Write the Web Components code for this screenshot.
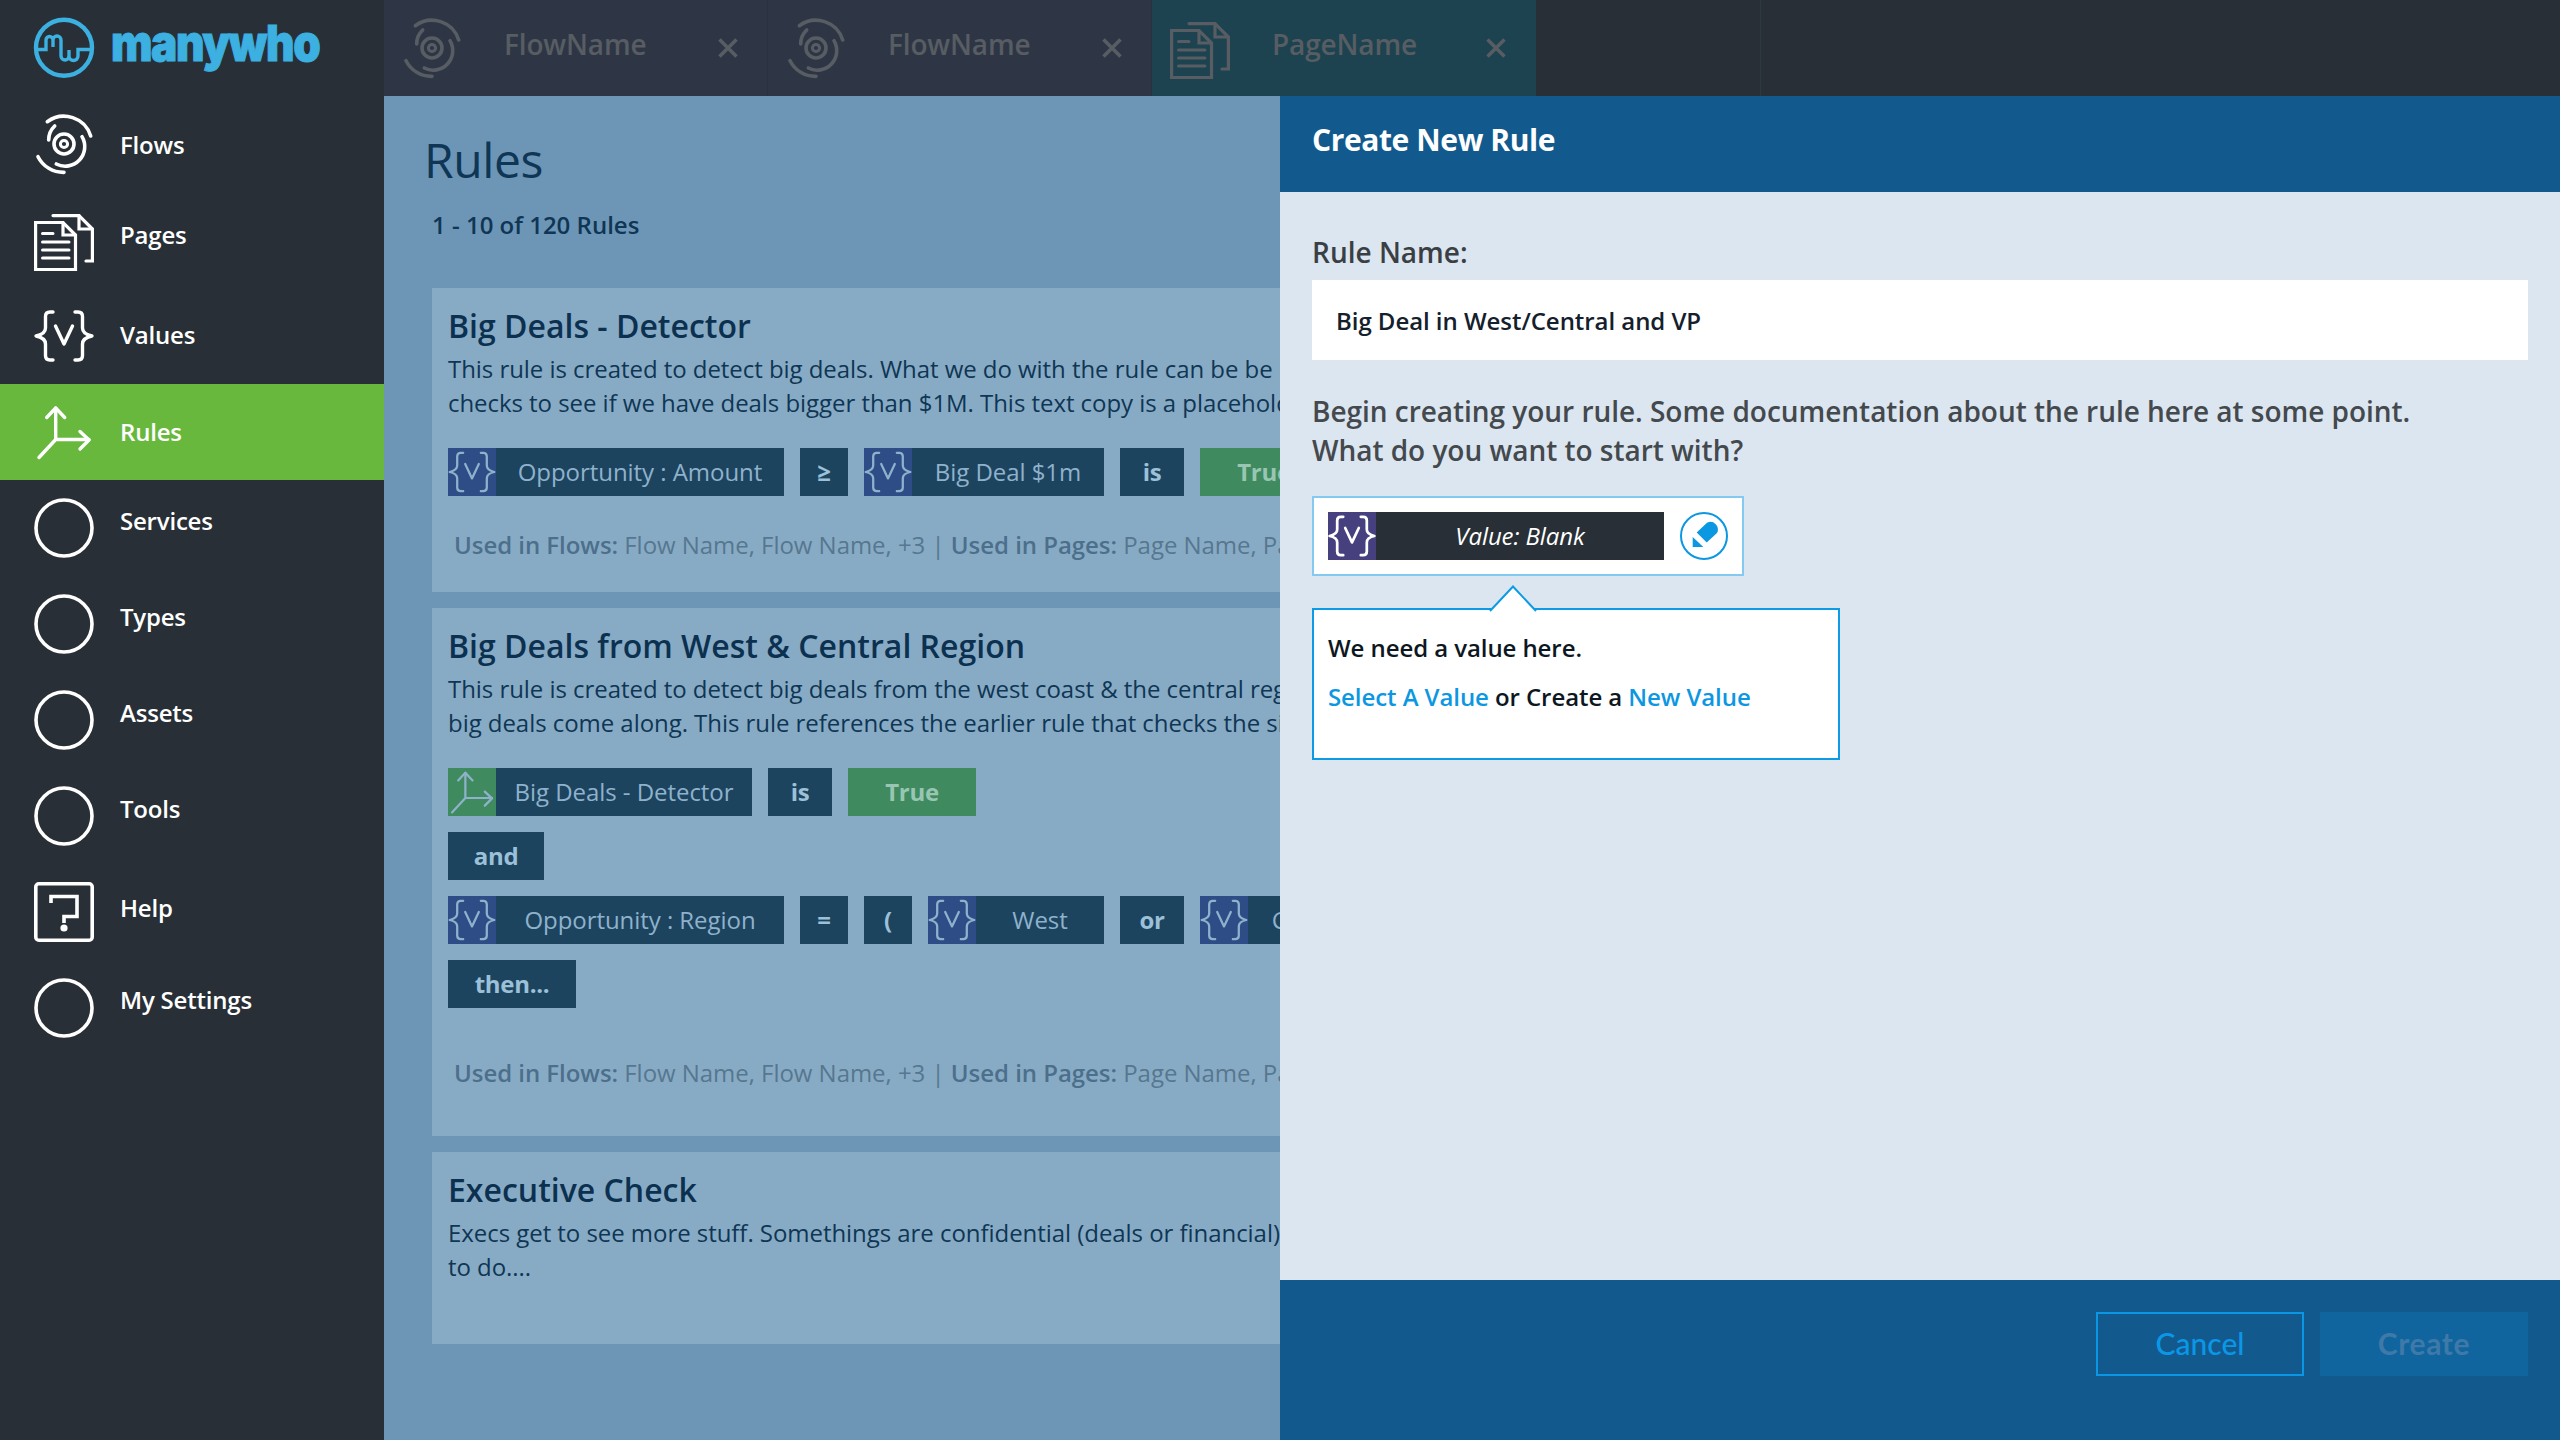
<!DOCTYPE html>
<html>
<head>
<meta charset="utf-8">
<title>ManyWho Rules</title>
<style>
  html, body { margin: 0; height: 100%; background: #282f36; }
  body { font-family: "Open Sans", "Liberation Sans", sans-serif; overflow: hidden; }
</style>
</head>
<body>
<mw-app>
  <mw-sidebar slot="side">
    <mw-nav-item icon="flow" lift="1">Flows</mw-nav-item>
    <mw-nav-item icon="page" lift="-5">Pages</mw-nav-item>
    <mw-nav-item icon="value" lift="-1">Values</mw-nav-item>
    <mw-nav-item icon="rule" active>Rules</mw-nav-item>
    <mw-nav-item icon="ring" lift="-7">Services</mw-nav-item>
    <mw-nav-item icon="ring" lift="-7">Types</mw-nav-item>
    <mw-nav-item icon="ring" lift="-7">Assets</mw-nav-item>
    <mw-nav-item icon="ring" lift="-7">Tools</mw-nav-item>
    <mw-nav-item icon="help" lift="-4">Help</mw-nav-item>
    <mw-nav-item icon="ring" lift="-8">My Settings</mw-nav-item>
  </mw-sidebar>

  <mw-tabs slot="tabs">
    <mw-tab icon="flow">FlowName</mw-tab>
    <mw-tab icon="flow">FlowName</mw-tab>
    <mw-tab icon="page" kind="page">PageName</mw-tab>
  </mw-tabs>

  <rules-page slot="content">
    <rule-card>
      <span slot="title">Big Deals - Detector</span>
      <span slot="text">This rule is created to detect big deals. What we do with the rule can be be<br>checks to see if we have deals bigger than $1M. This text copy is a placeholder</span>
      <chip-row>
        <rule-chip icon="value" w="336">Opportunity : Amount</rule-chip>
        <rule-chip op w="48">≥</rule-chip>
        <rule-chip icon="value" w="240">Big Deal $1m</rule-chip>
        <rule-chip op w="64">is</rule-chip>
        <rule-chip op green w="128">True</rule-chip>
      </chip-row>
      <rule-usage slot="usage"></rule-usage>
    </rule-card>

    <rule-card tall>
      <span slot="title">Big Deals from West &amp; Central Region</span>
      <span slot="text">This rule is created to detect big deals from the west coast &amp; the central region<br>big deals come along. This rule references the earlier rule that checks the size</span>
      <chip-row>
        <rule-chip icon="rule" green-icon w="304">Big Deals - Detector</rule-chip>
        <rule-chip op w="64">is</rule-chip>
        <rule-chip op green w="128">True</rule-chip>
      </chip-row>
      <chip-row>
        <rule-chip op w="96">and</rule-chip>
      </chip-row>
      <chip-row>
        <rule-chip icon="value" w="336">Opportunity : Region</rule-chip>
        <rule-chip op w="48">=</rule-chip>
        <rule-chip op w="48">(</rule-chip>
        <rule-chip icon="value" w="176">West</rule-chip>
        <rule-chip op w="64">or</rule-chip>
        <rule-chip icon="value" w="176">Central</rule-chip>
      </chip-row>
      <chip-row>
        <rule-chip op w="128">then...</rule-chip>
      </chip-row>
      <rule-usage slot="usage" far></rule-usage>
    </rule-card>

    <rule-card short>
      <span slot="title">Executive Check</span>
      <span slot="text">Execs get to see more stuff. Somethings are confidential (deals or financial)<br>to do....</span>
    </rule-card>
  </rules-page>

  <rule-modal slot="modal"></rule-modal>
</mw-app>

<script>
const ICONS = {
  flow: `<g fill="none" stroke="currentColor" stroke-width="3.6" stroke-linecap="round">
      <circle cx="30" cy="30" r="10"/><circle cx="30" cy="30" r="3.6" stroke-width="3"/>
      <path d="M13.3 7.7A28 28 0 0 1 56.7 22"/>
      <path d="M4 42.7A28.5 28.5 0 0 0 30 58.4"/>
      <path d="M14.7 26A19 19 0 0 1 20.7 12"/>
      <path d="M48 22.7A19.5 19.5 0 0 1 22.3 50"/></g>`,
  page: `<g transform="translate(0 4)" fill="none" stroke="currentColor" stroke-width="3.2" stroke-linejoin="miter" stroke-linecap="round">
      <path d="M1.6 8.5H29L41.5 21V55.5H1.6Z"/><path d="M29 8.5V21H41.5"/>
      <path d="M8.5 19.5H19M8.5 28H35M8.5 36H35M8.5 44H35" stroke-width="3"/>
      <path d="M19 1.6H45L58.4 15V47H52"/><path d="M45 1.6V15H58.4"/></g>`,
  value: `<g fill="none" stroke="currentColor" style="stroke-width:var(--icon-stroke,3.4px)" stroke-linecap="round" stroke-linejoin="round">
      <path d="M19 6H16Q11.5 6 11.5 10.5V22Q11.5 28 2 30Q11.5 32 11.5 38V49.5Q11.5 54 16 54H19"/>
      <path d="M41 6H44Q48.5 6 48.5 10.5V22Q48.5 28 58 30Q48.5 32 48.5 38V49.5Q48.5 54 44 54H41"/>
      <path d="M21.5 20L30 38L38.5 20"/></g>`,
  rule: `<g fill="none" stroke="currentColor" style="stroke-width:var(--icon-stroke,3.4px)" stroke-linecap="round" stroke-linejoin="round">
      <path d="M21.7 6V37.5L5 55.5M21.7 37.5H55"/>
      <path d="M12.7 15.5L21.7 6L30.7 15.5M46 29.5L55 38L46 47"/></g>`,
  ring: `<circle cx="30" cy="30" r="28" fill="none" stroke="currentColor" stroke-width="3.6"/>`,
  help: `<g fill="none" stroke="currentColor" stroke-width="3.6">
      <rect x="1.8" y="1.8" width="56.4" height="56.4" rx="3"/>
      <path d="M17 21V14.5H43V34.5H30V41"/></g><circle cx="30" cy="46" r="3.6" fill="currentColor"/>`
};

class MwIcon extends HTMLElement {
  constructor() {
    super();
    this.attachShadow({ mode: 'open' });
  }
  connectedCallback() {
    this.shadowRoot.innerHTML = `
      <style>
        :host { display: block; width: var(--icon-size, 60px); height: var(--icon-size, 60px); flex: none; }
        svg { display: block; width: 100%; height: 100%; overflow: visible; }
      </style>
      <svg viewBox="0 0 60 60">${ICONS[this.getAttribute('name')] || ''}</svg>`;
  }
}

class MwApp extends HTMLElement {
  constructor() {
    super();
    this.attachShadow({ mode: 'open' });
    this.shadowRoot.innerHTML = `
      <style>
        :host { display: grid; grid-template-columns: 384px 1fr; grid-template-rows: 96px 1fr; height: 100vh; overflow: hidden; }
        .side { grid-row: 1 / 3; display: block; }
        .content { position: relative; overflow: hidden; }
        .over { position: absolute; top: 0; bottom: 0; left: 896px; right: 0; }
      </style>
      <div class="side"><slot name="side"></slot></div>
      <div><slot name="tabs"></slot></div>
      <div class="content">
        <slot name="content"></slot>
        <div class="over"><slot name="modal"></slot></div>
      </div>`;
  }
}

class MwSidebar extends HTMLElement {
  constructor() {
    super();
    this.attachShadow({ mode: 'open' });
    this.shadowRoot.innerHTML = `
      <style>
        :host { display: block; height: 100%; background: #282f36; }
        .brand { height: 96px; display: flex; align-items: flex-start; padding-left: 28px; box-sizing: border-box; color: #3cb0e0; }
        .brand svg { width: 72px; height: 76px; margin-top: 10px; flex: none; }
        .word { margin: 8px 0 0 11px; font: 900 50px/70px Inter, "Liberation Sans", sans-serif; letter-spacing: -1.6px; -webkit-text-stroke: 1px #3cb0e0; transform: scaleX(.88); transform-origin: left center; }
      </style>
      <div class="brand">
        <svg viewBox="0 0 72 76" fill="none" stroke="currentColor">
          <circle cx="36" cy="37.7" r="28" stroke-width="4.4"/>
          <path stroke-width="3.4" d="M8 39.5H18V30A3.5 3.5 0 0 1 25 30V37M25 30A4 4 0 0 1 33 30V46A4 4 0 0 0 41 46V40M41 46A4.5 4.5 0 0 0 50 46V39.5H64"/>
        </svg>
        <div class="word">manywho</div>
      </div>
      <slot></slot>`;
  }
}

class MwNavItem extends HTMLElement {
  constructor() {
    super();
    this.attachShadow({ mode: 'open' });
  }
  connectedCallback() {
    const lift = this.getAttribute('lift') || 0;
    this.shadowRoot.innerHTML = `
      <style>
        :host { display: flex; align-items: center; height: 96px; padding-left: 34px; gap: 26px; color: #fff; font-size: 24px; font-weight: 600; letter-spacing: -0.2px; }
        :host([active]) { background: #69b83e; }
        .label { margin-top: ${lift * 2 - 1}px; }
      </style>
      <mw-icon name="${this.getAttribute('icon')}"></mw-icon>
      <span class="label"><slot></slot></span>`;
  }
}

class MwTabs extends HTMLElement {
  constructor() {
    super();
    this.attachShadow({ mode: 'open' });
    this.shadowRoot.innerHTML = `
      <style>
        :host { display: flex; height: 96px; background: #282f36; }
        .gap { width: 224px; border-right: 1px solid #2f373f; }
      </style>
      <slot></slot>
      <div class="gap"></div>`;
  }
}

class MwTab extends HTMLElement {
  constructor() {
    super();
    this.attachShadow({ mode: 'open' });
  }
  connectedCallback() {
    this.shadowRoot.innerHTML = `
      <style>
        :host { display: flex; align-items: center; width: 384px; box-sizing: border-box; padding-left: 18px; background: #2e3646; color: #575d62; border-right: 1px solid #2a3140; font-size: 28px; font-weight: 600; letter-spacing: -0.15px; }
        :host([kind="page"]) { background: #1d4350; border-right: 0; }
        .name { margin-left: 42px; width: 214px; margin-top: -8px; }
        svg { width: 20px; height: 20px; flex: none; }
      </style>
      <mw-icon name="${this.getAttribute('icon')}"></mw-icon>
      <span class="name"><slot></slot></span>
      <svg viewBox="0 0 20 20" stroke="currentColor" stroke-width="3.6"><path d="M1.5 1.5L18.5 18.5M18.5 1.5L1.5 18.5"/></svg>`;
  }
}

class RulesPage extends HTMLElement {
  constructor() {
    super();
    this.attachShadow({ mode: 'open' });
    this.shadowRoot.innerHTML = `
      <style>
        :host { display: block; height: 100%; box-sizing: border-box; padding: 0 48px; background: #6d95b6; color: #0f3654; }
        h1 { margin: 0; padding-top: 32px; height: 64px; font-size: 48px; line-height: 64px; font-weight: 400; margin-left: -8px; letter-spacing: -0.4px; }
        .count { height: 96px; padding-top: 17px; box-sizing: border-box; font-size: 24px; line-height: 32px; font-weight: 600; }
        .list { display: flex; flex-direction: column; gap: 16px; }
      </style>
      <h1>Rules</h1>
      <div class="count">1 - 10 of 120 Rules</div>
      <div class="list"><slot></slot></div>`;
  }
}

class RuleCard extends HTMLElement {
  constructor() {
    super();
    this.attachShadow({ mode: 'open' });
    this.shadowRoot.innerHTML = `
      <style>
        :host { display: block; box-sizing: border-box; min-height: 304px; padding: 16px 16px 0; background: #88abc5; white-space: nowrap; color: #0f3654; }
        :host([tall]) { min-height: 528px; }
        :host([short]) { min-height: 192px; }
        .title { height: 44px; font-size: 32px; line-height: 44px; font-weight: 600; color: #0c3150; }
        .text { margin: 4px 0 28px; font-size: 24px; line-height: 34px; letter-spacing: -0.05px; }
        .rows { display: flex; flex-direction: column; gap: 16px; }
      </style>
      <div class="title"><slot name="title"></slot></div>
      <div class="text"><slot name="text"></slot></div>
      <div class="rows"><slot></slot></div>
      <slot name="usage"></slot>`;
  }
}

class ChipRow extends HTMLElement {
  constructor() {
    super();
    this.attachShadow({ mode: 'open' });
    this.shadowRoot.innerHTML = `
      <style>:host { display: flex; gap: 16px; height: 48px; }</style>
      <slot></slot>`;
  }
}

class RuleChip extends HTMLElement {
  constructor() {
    super();
    this.attachShadow({ mode: 'open' });
  }
  connectedCallback() {
    const icon = this.getAttribute('icon');
    this.shadowRoot.innerHTML = `
      <style>
        :host { display: flex; flex: none; width: ${this.getAttribute('w')}px; height: 48px; background: #1d445f; color: #8fb2cc; font-size: 24px; line-height: 47px; letter-spacing: -0.05px; }
        :host([op]) { font-weight: 700; color: #9cc0d8; letter-spacing: -0.3px; }
        :host([green]) { background: #408a60; color: #98c6b2; }
        .ico { --icon-size: 48px; --icon-stroke: 2.8px; width: 48px; height: 48px; flex: none; background: #2e4d87; color: #8fb2cc; }
        :host([green-icon]) .ico { background: #408a60; }
        .t { flex: 1; text-align: center; white-space: nowrap; }
      </style>
      ${icon ? `<div class="ico"><mw-icon name="${icon}"></mw-icon></div>` : ''}
      <span class="t"><slot></slot></span>`;
  }
}

class RuleUsage extends HTMLElement {
  constructor() {
    super();
    this.attachShadow({ mode: 'open' });
    this.shadowRoot.innerHTML = `
      <style>
        :host { display: block; margin-top: 32px; padding-left: 6px; font-size: 24px; line-height: 34px; letter-spacing: -0.04px; color: #56778f; }
        :host([far]) { margin-top: 48px; }
        b { font-weight: 600; color: #4c6f8b; }
      </style>
      <b>Used in Flows:</b> Flow Name, Flow Name, +3 | <b>Used in Pages:</b> Page Name, Page`;
  }
}

class RuleModal extends HTMLElement {
  constructor() {
    super();
    this.attachShadow({ mode: 'open' });
    this.shadowRoot.innerHTML = `
      <style>
        :host { display: flex; flex-direction: column; height: 100%; background: #dce6f0; color: #3a3f44; }
        header { flex: none; height: 96px; box-sizing: border-box; padding: 0 32px 10px; display: flex; align-items: center; background: #125a8e; color: #fff; font-size: 30px; font-weight: 700; letter-spacing: -0.4px; }
        main { flex: 1; padding: 40px 32px 0; }
        label { display: block; height: 40px; line-height: 40px; margin-bottom: 8px; font-size: 28px; font-weight: 600; }
        .input { height: 80px; line-height: 82px; padding-left: 24px; background: #fff; color: #14202c; font-size: 24px; font-weight: 600; letter-spacing: -0.05px; }
        p { margin: 32px 0 26px; font-size: 28px; line-height: 39px; font-weight: 600; letter-spacing: -0.03px; color: #44494e; }
        .slotbox { box-sizing: border-box; width: 432px; height: 80px; border: 2px solid #84caf0; background: #fff; display: flex; align-items: center; padding-left: 14px; gap: 16px; }
        .pick { display: flex; width: 336px; height: 48px; background: #282f36; color: #fff; font-size: 24px; font-style: italic; font-weight: 400; line-height: 47px; letter-spacing: -0.1px; }
        .pick .ico { flex: none; width: 48px; height: 48px; background: #47407f; --icon-size: 48px; }
        .pick span { flex: 1; text-align: center; }
        .erase { width: 48px; height: 48px; flex: none; display: block; }
        .pop { position: relative; box-sizing: border-box; width: 528px; height: 152px; margin-top: 32px; padding: 21px 14px 0; border: 2px solid #0c9be4; background: #fff; color: #0d1722; font-size: 24px; font-weight: 600; line-height: 34px; letter-spacing: -0.08px; }
        .pop div + div { margin-top: 15px; }
        .pop a { color: #0c97e2; text-decoration: none; }
        .pop svg { position: absolute; left: 175px; top: -25px; width: 48px; height: 25px; overflow: visible; }
        footer { flex: none; height: 160px; box-sizing: border-box; padding: 32px; display: flex; justify-content: flex-end; gap: 16px; background: #125a8e; }
        button { width: 208px; height: 64px; padding: 0 0 3px; box-sizing: border-box; font: 500 30px Lato, "Liberation Sans", sans-serif; background: transparent; border: 2px solid #0b97e6; color: #0b97e6; }
        button.go { border: 0; background: #10659f; color: #3f79a8; font-weight: 700; letter-spacing: 0.6px; }
      </style>
      <header>Create New Rule</header>
      <main>
        <label>Rule Name:</label>
        <div class="input">Big Deal in West/Central and VP</div>
        <p>Begin creating your rule. Some documentation about the rule here at some point.<br>What do you want to start with?</p>
        <div class="slotbox">
          <div class="pick"><div class="ico"><mw-icon name="value"></mw-icon></div><span>Value: Blank</span></div>
          <svg class="erase" viewBox="0 0 48 48">
            <circle cx="24" cy="24" r="23" fill="none" stroke="#0c97e2" stroke-width="2"/>
            <path fill="#0c97e2" d="M16.7 20.6L27 10.8A7.5 7.5 0 0 1 37 21L26.7 30.6Z"/>
            <path fill="#0c97e2" d="M12.7 25V35H23.3Z"/>
          </svg>
        </div>
        <div class="pop">
          <svg viewBox="0 0 48 25"><path d="M1 26L24 1.5L47 26" fill="#fff" stroke="#0c9be4" stroke-width="2"/></svg>
          <div>We need a value here.</div>
          <div><a>Select A Value</a> or Create a <a>New Value</a></div>
        </div>
      </main>
      <footer>
        <button>Cancel</button>
        <button class="go">Create</button>
      </footer>`;
  }
}

customElements.define('mw-icon', MwIcon);
customElements.define('mw-app', MwApp);
customElements.define('mw-sidebar', MwSidebar);
customElements.define('mw-nav-item', MwNavItem);
customElements.define('mw-tabs', MwTabs);
customElements.define('mw-tab', MwTab);
customElements.define('rules-page', RulesPage);
customElements.define('rule-card', RuleCard);
customElements.define('chip-row', ChipRow);
customElements.define('rule-chip', RuleChip);
customElements.define('rule-usage', RuleUsage);
customElements.define('rule-modal', RuleModal);
</script>
</body>
</html>
